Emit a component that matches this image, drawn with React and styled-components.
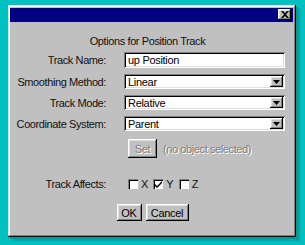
import React from 'react'
import styled, { createGlobalStyle } from 'styled-components'

const Global = createGlobalStyle`
  html, body {
    margin: 0;
    padding: 0;
    background: #00c0c0;
  }
  body {
    width: 305px;
    height: 245px;
    overflow: hidden;
    font-family: "Liberation Sans", Arial, sans-serif;
  }
`

const raised = `
  box-shadow: inset -1px -1px #000, inset 1px 1px #fff, inset -2px -2px #808080, inset 2px 2px #dfdfdf;
`

const sunken = `
  box-shadow: inset 1px 1px #808080, inset -1px -1px #fff, inset 2px 2px #000, inset -2px -2px #dfdfdf;
`

const Window = styled.div`
  margin: 5px 0 0 8px;
  width: 288px;
  height: 232px;
  box-sizing: border-box;
  padding: 3px 3px 0 2px;
  background: #c0c0c0;
  box-shadow: inset -1px -1px #000, inset 1px 1px #dfdfdf, inset -2px -2px #808080, inset 2px 2px #fff,
    2px 2px 0 #009898, 4px 4px 1px #00a8a8;
  display: flex;
  flex-direction: column;
`

const TitleBar = styled.div`
  height: 14px;
  background: #000080;
  display: flex;
  justify-content: flex-end;
  align-items: flex-start;
  padding: 1px 2px 0 0;
  box-sizing: border-box;
`

const CloseBox = styled.div`
  width: 13px;
  height: 11px;
  background: #c0c0c0;
  ${raised}
  display: flex;
  align-items: center;
  justify-content: center;
`

const Heading = styled.div`
  margin-top: 13px;
  padding-right: 8px;
  text-align: center;
  font-size: 11px;
  line-height: 13px;
  letter-spacing: -0.4px;
  color: #111;
`

const Form = styled.div`
  margin-top: 4px;
  display: grid;
  grid-template-columns: 96px 161px;
  column-gap: 18px;
  row-gap: 6px;
  align-items: center;
`

const Label = styled.div`
  text-align: right;
  font-size: 11px;
  letter-spacing: -0.4px;
  color: #111;
`

const Field = styled.div`
  position: relative;
  height: ${p => p.$h || 15}px;
  background: #fff;
  ${sunken}
  display: flex;
  align-items: center;
  padding-left: 4px;
  font-size: 11px;
  letter-spacing: -0.3px;
  color: #000;
`

const DropButton = styled.div`
  position: absolute;
  right: 2px;
  top: 2px;
  bottom: 2px;
  width: 13px;
  background: #c0c0c0;
  ${raised}
  display: flex;
  align-items: center;
  justify-content: center;
`

const SetRow = styled.div`
  grid-column: 2;
  margin-top: 2px;
  padding-left: 4px;
  display: flex;
  align-items: center;
  gap: 6px;
`

const Button = styled.div`
  height: ${p => p.$h || 17}px;
  width: ${p => p.$w}px;
  background: #c0c0c0;
  ${raised}
  display: flex;
  align-items: center;
  justify-content: center;
  font-size: 11px;
  letter-spacing: -0.3px;
  color: ${p => (p.$disabled ? '#808080' : '#000')};
  text-shadow: ${p => (p.$disabled ? '1px 1px #fff' : 'none')};
`

const Muted = styled.span`
  font-size: 11px;
  letter-spacing: -0.4px;
  color: #808080;
  text-shadow: 1px 1px #fff;
`

const AffectsLabel = styled(Label)`
  margin-top: 14px;
`

const Checks = styled.div`
  margin-top: 14px;
  padding-left: 4px;
  display: flex;
  align-items: center;
  gap: 5px;
`

const Check = styled.label`
  display: flex;
  align-items: center;
  gap: 3px;
  font-size: 11px;
  color: #111;
`

const Box = styled.span`
  width: 10px;
  height: 10px;
  background: #fff;
  box-shadow: inset 1px 1px #808080, inset 2px 2px #000, inset -1px -1px #fff;
  display: flex;
  align-items: center;
  justify-content: center;
`

const Footer = styled.div`
  margin-top: 14px;
  display: flex;
  justify-content: center;
  gap: 4px;
  padding-left: 2px;
`

function Arrow() {
  return (
    <svg width="7" height="4" viewBox="0 0 7 4">
      <path d="M0 0h7L3.5 4z" fill="#000" />
    </svg>
  )
}

function Select({ value }) {
  return (
    <Field>
      {value}
      <DropButton>
        <Arrow />
      </DropButton>
    </Field>
  )
}

function CheckItem({ letter, checked }) {
  return (
    <Check>
      <Box>
        {checked && (
          <svg width="7" height="7" viewBox="0 0 7 7">
            <path d="M0 3l2 2 5-5v2l-5 5-2-2z" fill="#000" />
          </svg>
        )}
      </Box>
      {letter}
    </Check>
  )
}

export default function App() {
  return (
    <>
      <Global />
      <Window>
        <TitleBar>
          <CloseBox>
            <svg width="8" height="7" viewBox="0 0 8 7">
              <path d="M0 0h2l2 2 2-2h2L5 3.5 8 7H6L4 5 2 7H0l3-3.5z" fill="#000" />
            </svg>
          </CloseBox>
        </TitleBar>
        <Heading>Options for Position Track</Heading>
        <Form>
          <Label>Track Name:</Label>
          <Field $h={16}>up Position</Field>
          <Label>Smoothing Method:</Label>
          <Select value="Linear" />
          <Label>Track Mode:</Label>
          <Select value="Relative" />
          <Label>Coordinate System:</Label>
          <Select value="Parent" />
          <SetRow>
            <Button $w={29} $h={19} $disabled>Set</Button>
            <Muted>(no object selected)</Muted>
          </SetRow>
          <AffectsLabel>Track Affects:</AffectsLabel>
          <Checks>
            <CheckItem letter="X" />
            <CheckItem letter="Y" checked />
            <CheckItem letter="Z" />
          </Checks>
        </Form>
        <Footer>
          <Button $w={25}>OK</Button>
          <Button $w={43}>Cancel</Button>
        </Footer>
      </Window>
    </>
  )
}
